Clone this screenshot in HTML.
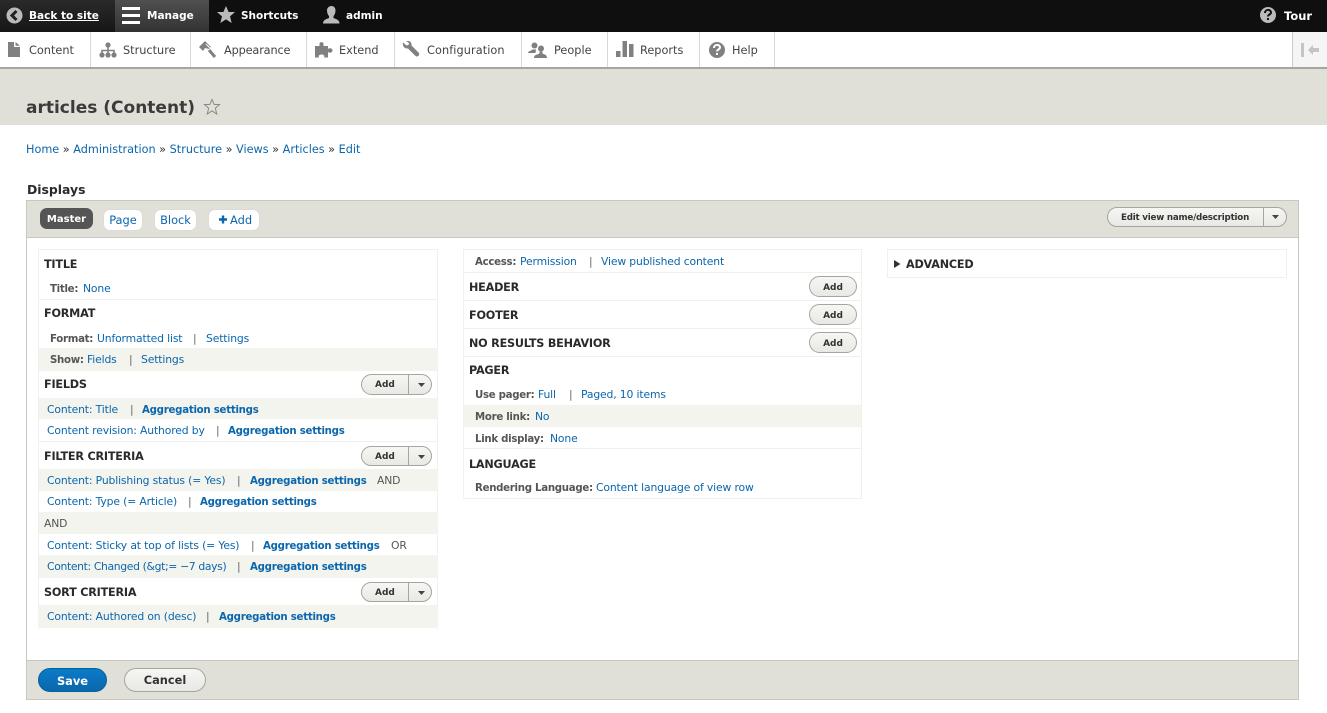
<!DOCTYPE html>
<html lang="en"><head><meta charset="utf-8"><title>articles (Content)</title>
<style>
html,body{margin:0;padding:0;width:1327px;height:713px;overflow:hidden;background:#fff}
body{position:relative;font-family:"DejaVu Sans","Liberation Sans",sans-serif;font-size:10.8px;letter-spacing:-.15px;color:#333}
a{color:#0b66ad;text-decoration:none}
.b,.t,.h,.n,.w,.l{position:absolute;white-space:nowrap}
.b{display:block}
.t{line-height:16px;margin-top:-7px}
.h{line-height:16px;margin-top:-7px;font-weight:bold;font-size:11.2px;letter-spacing:-.2px;color:#2a2a2a}
.n{line-height:16px;margin-top:-7px;color:#444;font-size:11.3px;letter-spacing:0;top:50px}
.w{line-height:16px;margin-top:-8px;color:#fff;font-weight:bold;font-size:10.5px;letter-spacing:0;top:16px}
.l{line-height:16px;margin-top:-6px;font-weight:bold;color:#555;font-size:10.2px;letter-spacing:-.28px}
.a{font-weight:bold;font-size:10.2px;letter-spacing:-.25px;margin-top:-6px}
.p{color:#666}
.btn{position:absolute;box-sizing:border-box;border:1px solid #a6a6a0;border-radius:11px;background:linear-gradient(#f6f6f3,#e8e8e4);color:#333;font-size:9px;letter-spacing:0;font-weight:bold;text-align:center}
.tab{position:absolute;box-sizing:border-box;background:#fff;border:1px solid #dcdcd6;border-radius:7px;height:22px;top:209px;line-height:21px;text-align:center;font-size:11.4px;letter-spacing:0;color:#0b66ad}
svg{position:absolute;display:block}
</style></head><body>

<div class="b" style="left:0;top:0;width:1327px;height:32px;background:#0f0f0f"></div>
<div class="b" style="left:0;top:0;width:115px;height:32px;background:linear-gradient(#2a2a2a,#161616)"></div>
<div class="b" style="left:115px;top:0;width:94px;height:32px;background:linear-gradient(#505050,#333)"></div>

<svg style="left:6px;top:7px" width="17" height="17" viewBox="0 0 17 17"><circle cx="8.5" cy="8.5" r="8" fill="#bbb"/><path d="M10.5 4 L6 8.5 L10.5 13" fill="none" stroke="#222" stroke-width="3"/></svg>
<a class="w" style="left:29px;text-decoration:underline;color:#fff">Back to site</a>
<svg style="left:122px;top:7px" width="18" height="17" viewBox="0 0 18 17"><path d="M0 1.5h18M0 8.5h18M0 15.5h18" stroke="#fff" stroke-width="3"/></svg>
<span class="w" style="left:147px">Manage</span>
<svg style="left:217px;top:6px" width="18" height="18" viewBox="0 0 18 18"><path d="M9 0l2.6 6H18l-5 4.4L14.7 17 9 13.4 3.3 17 5 10.4 0 6h6.400z" fill="#bbb"/></svg>
<span class="w" style="left:241px">Shortcuts</span>
<svg style="left:323px;top:6px" width="17" height="18" viewBox="0 0 17 18"><path d="M8.500 0c2.600 0 4 2 4 4.500 0 2.500-1 4.500-2 5.500v2c2 1 6 1.500 6 5.500H0c0-4 4-4.500 6-5.500v-2c-1-1-2-3-2-5.500C4 2 5.900 0 8.500 0z" fill="#bbb"/></svg>
<span class="w" style="left:346px">admin</span>
<svg style="left:1260px;top:7px" width="16" height="16" viewBox="0 0 16 16"><circle cx="8" cy="8" r="8" fill="#bbb"/><path d="M5 6c0-4 6-4 6-.5 0 2-3 2-3 4" fill="none" stroke="#111" stroke-width="2"/><rect x="7" y="11" width="2" height="2" fill="#111"/></svg>
<span class="w" style="left:1284px;font-size:11.5px">Tour</span>

<div class="b" style="left:0;top:32px;width:1327px;height:35px;background:#fff"></div>
<div class="b" style="left:0;top:67px;width:1327px;height:2px;background:#a5a69e"></div>
<div class="b" style="left:1292px;top:32px;width:35px;height:35px;background:#f5f5f5;border-left:1px solid #ccc;box-sizing:border-box"></div>
<div class="b" style="left:90px;top:32px;width:1px;height:35px;background:#d8d8d8"></div>
<div class="b" style="left:190px;top:32px;width:1px;height:35px;background:#d8d8d8"></div>
<div class="b" style="left:306px;top:32px;width:1px;height:35px;background:#d8d8d8"></div>
<div class="b" style="left:394px;top:32px;width:1px;height:35px;background:#d8d8d8"></div>
<div class="b" style="left:521px;top:32px;width:1px;height:35px;background:#d8d8d8"></div>
<div class="b" style="left:607px;top:32px;width:1px;height:35px;background:#d8d8d8"></div>
<div class="b" style="left:699px;top:32px;width:1px;height:35px;background:#d8d8d8"></div>
<div class="b" style="left:774px;top:32px;width:1px;height:35px;background:#d8d8d8"></div>

<svg style="left:8px;top:42px" width="12" height="15" viewBox="0 0 12 15"><path d="M0 0h6v5h6v10H0zM7.500 0L12 3.800H7.500z" fill="#808080"/></svg>
<span class="n" style="left:29px">Content</span>
<svg style="left:99px;top:42px" width="18" height="16" viewBox="0 0 18 16"><path d="M9 3v5M3 13V8.500h12V13" fill="none" stroke="#808080" stroke-width="1.600"/><circle cx="9" cy="3" r="2.600" fill="#808080"/><circle cx="3" cy="13" r="2.600" fill="#808080"/><circle cx="9" cy="13" r="2.600" fill="#808080"/><circle cx="15" cy="13" r="2.600" fill="#808080"/><path d="M9 8v5" stroke="#808080" stroke-width="1.600"/></svg>
<span class="n" style="left:123px">Structure</span>
<svg style="left:199px;top:41px" width="18" height="18" viewBox="0 0 18 18"><path d="M0 6L6 0l6 6-2 2-4-1-2 3z" fill="#808080"/><path d="M7 3l5 5" stroke="#fff" stroke-width="1"/><path d="M10 9l6 7" stroke="#808080" stroke-width="3"/></svg>
<span class="n" style="left:224px;letter-spacing:-.15px">Appearance</span>
<svg style="left:315px;top:42px" width="18" height="16" viewBox="0 0 18 16"><path d="M0 4h4.500V2c0-2.500 4-2.500 4 0v2H13v3c2-1.500 4.500-.5 4.500 1.500S15 11.500 13 10v5.500H9c1-2-.5-3-2.500-3S3 13.500 4 15.500H0z" fill="#808080"/></svg>
<span class="n" style="left:339px">Extend</span>
<svg style="left:402px;top:41px" width="18" height="18" viewBox="0 0 18 18"><path d="M1 1.500l3.500 3 2-.5.5-2-3-2c3-1 6 1 5.500 4.500L17 12c1 2-1.500 4.500-3.500 3L6 7.500C3 8 0 5 1 1.500z" fill="#808080"/></svg>
<span class="n" style="left:427px;letter-spacing:.08px">Configuration</span>
<svg style="left:528px;top:42px" width="19" height="16" viewBox="0 0 19 16"><circle cx="6.500" cy="3.500" r="3" fill="#808080"/><path d="M0 11c0-2 3-2 4.500-3.500h3.500L7.500 11z" fill="#808080"/><circle cx="13" cy="6.500" r="3" fill="#808080"/><path d="M6 16c0-3.500 3-3 5.500-4.500v-2h3v2c2 1 4.500 1 4.500 4.500z" fill="#808080"/></svg>
<span class="n" style="left:554px">People</span>
<svg style="left:616px;top:41px" width="18" height="16" viewBox="0 0 18 16"><path d="M0 10h4.500v6H0zM6.500 0H11v16H6.500zM13 3h4.500v13H13z" fill="#808080"/></svg>
<span class="n" style="left:640px">Reports</span>
<svg style="left:709px;top:42px" width="16" height="16" viewBox="0 0 16 16"><circle cx="8" cy="8" r="8" fill="#808080"/><path d="M5 6c0-4 6-4 6-.5 0 2-3 2-3 4" fill="none" stroke="#fff" stroke-width="2"/><rect x="7" y="11" width="2" height="2" fill="#fff"/></svg>
<span class="n" style="left:732px">Help</span>
<svg style="left:1301px;top:43px" width="18" height="14" viewBox="0 0 18 14"><path d="M0 0h3v14H0zM7 7l5-5v3h6v4h-6v3z" fill="#c4c4c4"/></svg>

<div class="b" style="left:0;top:69px;width:1327px;height:56px;background:#e0e0d8"></div>
<span class="t" style="left:26px;top:108px;font-size:17px;letter-spacing:0;line-height:24px;margin-top:-12px;font-weight:bold;color:#3b3b3b">articles (Content)</span>
<svg style="left:203px;top:98px" width="18" height="18" viewBox="0 0 18 18"><path d="M9 1.500l2.200 5h5.300l-4.200 3.700 1.500 5.800L9 12.900 4.200 16l1.500-5.800L1.500 6.500h5.300z" fill="none" stroke="#8c8c80" stroke-width="1"/></svg>

<span class="t" style="left:26px;top:149px;font-size:11.25px;letter-spacing:0"><a>Home</a> » <a>Administration</a> » <a>Structure</a> » <a>Views</a> » <a>Articles</a> » <a>Edit</a></span>
<span class="t" style="left:27px;top:189px;font-size:12.4px;letter-spacing:0;font-weight:bold;color:#2a2a2a">Displays</span>

<div class="b" style="left:26px;top:200px;width:1273px;height:500px;box-sizing:border-box;border:1px solid #c8c8c2"></div>
<div class="b" style="left:27px;top:201px;width:1271px;height:37px;box-sizing:border-box;background:#e0e0d8;border-bottom:1px solid #c8c8c2"></div>
<div class="b" style="left:27px;top:660px;width:1271px;height:39px;box-sizing:border-box;background:#e0e0d8;border-top:1px solid #c8c8c2"></div>

<div class="tab" style="left:40px;top:208px;width:53px;height:21px;background:#555;border-color:#555;color:#fff;font-weight:bold;font-size:10px;line-height:22px">Master</div>
<div class="tab" style="left:103px;width:40px">Page</div>
<div class="tab" style="left:154px;width:43px">Block</div>
<div class="tab" style="left:208px;width:52px;text-align:left;padding-left:21px">Add</div>
<svg style="left:219px;top:215px" width="8" height="9" viewBox="0 0 8 9"><path d="M0 4.500h8M4 .5v8" stroke="#0b66ad" stroke-width="2.400"/></svg>

<div class="btn" style="left:1107px;top:207px;width:180px;height:20px;line-height:21px;text-align:left;padding-left:13px;font-size:8.7px;letter-spacing:-.2px">Edit view name/description</div>
<div class="b" style="left:1263px;top:208px;width:1px;height:18px;background:#a6a6a0"></div>
<svg style="left:1272px;top:215px" width="7" height="4"><path d="M0 0h7L3.500 4z" fill="#444"/></svg>

<!-- left column -->
<div class="b" style="left:38px;top:249px;width:400px;height:380px;box-sizing:border-box;border:1px solid #f0f0ec;border-bottom:0"></div>
<div class="b" style="left:38px;top:299px;width:400px;height:1px;background:#f0f0ec"></div>
<div class="b" style="left:39px;top:348px;width:399px;height:23px;background:#f3f4ee"></div>
<div class="b" style="left:39px;top:398px;width:399px;height:21px;background:#f3f4ee"></div>
<div class="b" style="left:38px;top:441px;width:400px;height:1px;background:#f0f0ec"></div>
<div class="b" style="left:39px;top:469px;width:399px;height:22px;background:#f3f4ee"></div>
<div class="b" style="left:39px;top:512px;width:399px;height:22px;background:#f3f4ee"></div>
<div class="b" style="left:39px;top:555px;width:399px;height:23px;background:#f3f4ee"></div>
<div class="b" style="left:38px;top:605px;width:400px;height:23px;background:#f3f4ee"></div>

<span class="h" style="left:44px;top:264px">TITLE</span>
<span class="l" style="left:50px;top:288px">Title:</span><a class="t" style="left:83px;top:288px">None</a>
<span class="h" style="left:44px;top:313px">FORMAT</span>
<span class="l" style="left:50px;top:338px">Format:</span><a class="t" style="left:97px;top:338px">Unformatted list</a><span class="t p" style="left:193px;top:338px">|</span><a class="t" style="left:206px;top:338px">Settings</a>
<span class="l" style="left:50px;top:359px">Show:</span><a class="t" style="left:87px;top:359px">Fields</a><span class="t p" style="left:129px;top:359px">|</span><a class="t" style="left:141px;top:359px">Settings</a>
<span class="h" style="left:44px;top:384px">FIELDS</span>
<a class="t" style="left:47px;top:409px">Content: Title</a><span class="t p" style="left:130px;top:409px">|</span><a class="t a" style="left:142px;top:409px">Aggregation settings</a>
<a class="t" style="left:47px;top:430px">Content revision: Authored by</a><span class="t p" style="left:216px;top:430px">|</span><a class="t a" style="left:228px;top:430px">Aggregation settings</a>
<span class="h" style="left:44px;top:456px">FILTER CRITERIA</span>
<a class="t" style="left:47px;top:480px">Content: Publishing status (= Yes)</a><span class="t p" style="left:237px;top:480px">|</span><a class="t a" style="left:250px;top:480px">Aggregation settings</a><span class="t" style="left:377px;top:480px;color:#555">AND</span>
<a class="t" style="left:47px;top:501px">Content: Type (= Article)</a><span class="t p" style="left:188px;top:501px">|</span><a class="t a" style="left:200px;top:501px">Aggregation settings</a>
<span class="t" style="left:44px;top:523px;color:#555">AND</span>
<a class="t" style="left:47px;top:545px">Content: Sticky at top of lists (= Yes)</a><span class="t p" style="left:251px;top:545px">|</span><a class="t a" style="left:263px;top:545px">Aggregation settings</a><span class="t" style="left:391px;top:545px;color:#555">OR</span>
<a class="t" style="left:47px;top:566px;letter-spacing:-.35px">Content: Changed (&amp;gt;= −7 days)</a><span class="t p" style="left:237px;top:566px">|</span><a class="t a" style="left:250px;top:566px">Aggregation settings</a>
<span class="h" style="left:44px;top:592px">SORT CRITERIA</span>
<a class="t" style="left:47px;top:616px">Content: Authored on (desc)</a><span class="t p" style="left:206px;top:616px">|</span><a class="t a" style="left:219px;top:616px">Aggregation settings</a>

<div class="btn" style="left:361px;top:374px;width:71px;height:21px;line-height:21px;text-align:left;padding-left:13px">Add</div><div class="b" style="left:408px;top:375px;width:1px;height:19px;background:#a6a6a0"></div><svg style="left:418px;top:383px" width="7" height="4"><path d="M0 0h7L3.500 4z" fill="#444"/></svg>
<div class="btn" style="left:361px;top:446px;width:71px;height:20px;line-height:21px;text-align:left;padding-left:13px">Add</div><div class="b" style="left:408px;top:447px;width:1px;height:18px;background:#a6a6a0"></div><svg style="left:418px;top:455px" width="7" height="4"><path d="M0 0h7L3.500 4z" fill="#444"/></svg>
<div class="btn" style="left:361px;top:582px;width:71px;height:20px;line-height:21px;text-align:left;padding-left:13px">Add</div><div class="b" style="left:408px;top:583px;width:1px;height:18px;background:#a6a6a0"></div><svg style="left:418px;top:591px" width="7" height="4"><path d="M0 0h7L3.500 4z" fill="#444"/></svg>

<!-- middle column -->
<div class="b" style="left:463px;top:249px;width:399px;height:250px;box-sizing:border-box;border:1px solid #f0f0ec"></div>
<div class="b" style="left:464px;top:272px;width:397px;height:1px;background:#f0f0ec"></div>
<div class="b" style="left:464px;top:300px;width:397px;height:1px;background:#f0f0ec"></div>
<div class="b" style="left:464px;top:328px;width:397px;height:1px;background:#f0f0ec"></div>
<div class="b" style="left:464px;top:356px;width:397px;height:1px;background:#f0f0ec"></div>
<div class="b" style="left:464px;top:405px;width:397px;height:22px;background:#f3f4ee"></div>
<div class="b" style="left:464px;top:448px;width:397px;height:1px;background:#f0f0ec"></div>

<span class="l" style="left:475px;top:261px">Access:</span><a class="t" style="left:520px;top:261px">Permission</a><span class="t p" style="left:589px;top:261px">|</span><a class="t" style="left:601px;top:261px">View published content</a>
<span class="h" style="left:469px;top:287px">HEADER</span><div class="btn" style="left:809px;top:276px;width:48px;height:21px;line-height:22px">Add</div>
<span class="h" style="left:469px;top:315px">FOOTER</span><div class="btn" style="left:809px;top:304px;width:48px;height:21px;line-height:22px">Add</div>
<span class="h" style="left:469px;top:343px">NO RESULTS BEHAVIOR</span><div class="btn" style="left:809px;top:332px;width:48px;height:21px;line-height:22px">Add</div>
<span class="h" style="left:469px;top:370px">PAGER</span>
<span class="l" style="left:475px;top:394px">Use pager:</span><a class="t" style="left:538px;top:394px">Full</a><span class="t p" style="left:569px;top:394px">|</span><a class="t" style="left:581px;top:394px">Paged, 10 items</a>
<span class="l" style="left:475px;top:416px">More link:</span><a class="t" style="left:535px;top:416px">No</a>
<span class="l" style="left:475px;top:438px">Link display:</span><a class="t" style="left:550px;top:438px">None</a>
<span class="h" style="left:469px;top:464px">LANGUAGE</span>
<span class="l" style="left:475px;top:487px">Rendering Language:</span><a class="t" style="left:596px;top:487px">Content language of view row</a>

<!-- right column -->
<div class="b" style="left:887px;top:249px;width:400px;height:29px;box-sizing:border-box;border:1px solid #f0f0ec"></div>
<svg style="left:894px;top:260px" width="7" height="8"><path d="M0 0l6.500 4L0 8z" fill="#333"/></svg>
<span class="h" style="left:906px;top:264px">ADVANCED</span>

<div class="btn" style="left:38px;top:668px;width:69px;height:24px;line-height:24px;border-radius:12px;background:linear-gradient(#0a7bc8,#0a67ac);border-color:#0a5f9e;color:#fff;font-size:11.4px">Save</div>
<div class="btn" style="left:124px;top:668px;width:82px;height:24px;line-height:23px;border-radius:12px;font-size:11.4px">Cancel</div>
</body></html>
